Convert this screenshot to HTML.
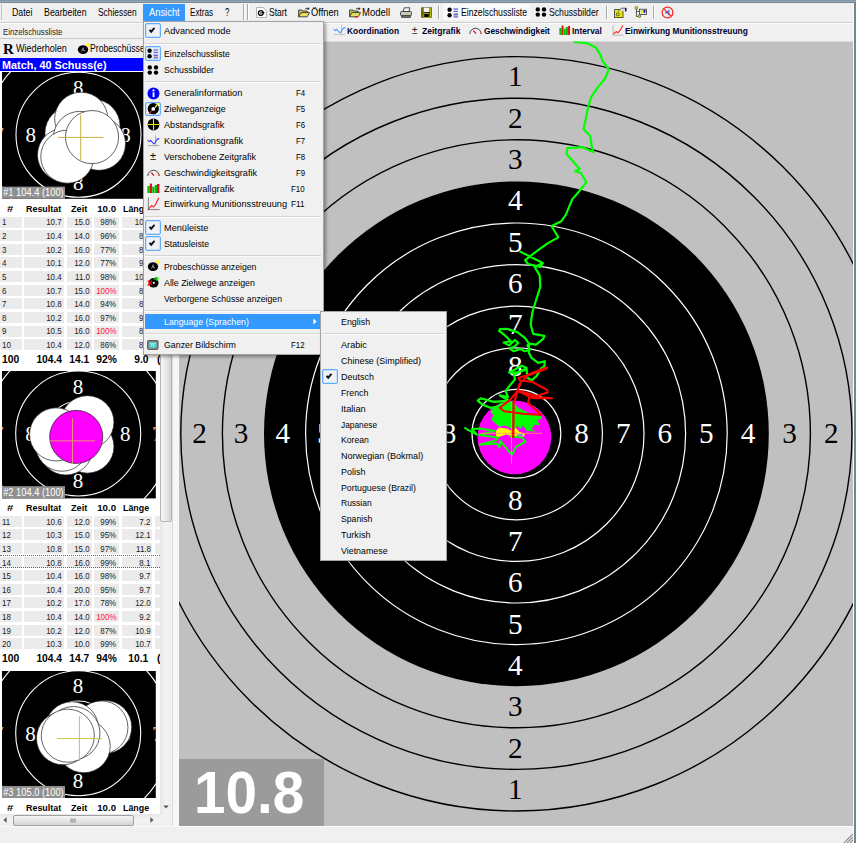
<!DOCTYPE html>
<html lang="de"><head><meta charset="utf-8"><title>Einzelschussliste</title>
<style>
html,body{margin:0;padding:0}
body{width:856px;height:843px;position:relative;overflow:hidden;background:#f0f0f0;font-family:"Liberation Sans",sans-serif;font-size:10px;color:#000}
.abs{position:absolute}
.t{position:absolute;white-space:nowrap;line-height:1;transform-origin:0 50%}
.c{position:absolute;background:#ebebeb}
.ck{border:1px solid #62adfb;box-shadow:inset 0 0 0 0.5px #a8d0fb;background:#eef1f5;border-radius:2px}
.menu{position:absolute;background:#f0f0f0;border:1px solid #a2a2a2;box-shadow:2px 2px 3px rgba(0,0,0,.35)}
.sep{position:absolute;height:0;border-top:1px solid #d4d4d4;border-bottom:1px solid #fbfbfb}
.vs{position:absolute;width:0;border-left:1px solid #a8a8a8;border-right:1px solid #fdfdfd}
</style></head><body>
<div class="abs" style="left:0;top:0;width:856px;height:3px;background:linear-gradient(#7d97ab 0,#7d97ab 33%,#93a8b8 33%,#93a8b8 66%,#7a8790 66%)"></div>
<div class="abs" style="left:854.4px;top:2px;width:1.6px;height:841px;background:#74858f"></div>
<div class="abs" style="left:853px;top:3px;width:1.4px;height:840px;background:#fafafa"></div>
<div class="abs" style="left:0;top:3px;width:853px;height:18.6px;background:#f0f0f0"></div>
<div class="abs" style="left:0;top:21.6px;width:853px;height:1px;background:#cfcfcf"></div>
<div class="abs" style="left:0;top:22.6px;width:853px;height:1px;background:#fafafa"></div>
<div class="abs" style="left:1.4px;top:4px;width:1px;height:16px;background:#c4c4c4"></div>
<div class="abs" style="left:142.9px;top:3.6px;width:42.1px;height:17.4px;background:#3399ff"></div>
<div class="vs" style="left:243.4px;top:4px;height:16.4px"></div><div class="vs" style="left:247.2px;top:4px;height:16.4px"></div>
<div class="vs" style="left:438.4px;top:5.6px;height:13px"></div>
<div class="abs" style="left:443.2px;top:4.4px;width:87px;height:16px;background:#f9f9f9;border-radius:2px"></div>
<div class="vs" style="left:606px;top:5.6px;height:13px"></div><div class="vs" style="left:653.2px;top:5.6px;height:13px"></div>
<svg class="abs" style="left:255.9px;top:6.8px" width="11" height="11" viewBox="0 0 11 11" preserveAspectRatio="none"><path d="M0.5 0.5h6.6l3.4 3.2v6.8h-10z" fill="#fff" stroke="#999" stroke-width="0.7"/><circle cx="4.8" cy="6" r="2.4" fill="none" stroke="#000" stroke-width="1.3"/><circle cx="4.8" cy="6" r="0.7" fill="#000"/><path d="M5.4 5.8h3" stroke="#000" stroke-width="1.1"/></svg><svg class="abs" style="left:297.6px;top:6.7px" width="12" height="11" viewBox="0 0 12 11" preserveAspectRatio="none"><path d="M0.6 9.8V3h3.4l0.8 1h4.4v1.6" fill="#c8c060" stroke="#222" stroke-width="0.8"/><path d="M0.6 9.8L2.8 5.6h8.8L9.2 9.8z" fill="#e8e060" stroke="#222" stroke-width="0.8"/><path d="M7 2.2q2-2 3.6-0.4M10.8 0.6v1.6h-1.6" fill="none" stroke="#000" stroke-width="0.8"/></svg><svg class="abs" style="left:348.8px;top:6.7px" width="12" height="11" viewBox="0 0 12 11" preserveAspectRatio="none"><path d="M0.6 9.8V3h3.4l0.8 1h4.4v1.6" fill="#c8c060" stroke="#222" stroke-width="0.8"/><path d="M0.6 9.8L2.8 5.6h8.8L9.2 9.8z" fill="#e8e060" stroke="#222" stroke-width="0.8"/><path d="M7 2.2q2-2 3.6-0.4M10.8 0.6v1.6h-1.6" fill="none" stroke="#000" stroke-width="0.8"/><path d="M5.6 9.2l3.2 0l-1.6 2z" fill="#ff0000"/></svg><svg class="abs" style="left:399.8px;top:6.8px" width="12" height="11" viewBox="0 0 12 11" preserveAspectRatio="none"><path d="M3 4.6L4.4 0.8h5.4L9 4.6z" fill="#fff" stroke="#222" stroke-width="0.8"/><rect x="0.6" y="4.4" width="10.8" height="4.4" rx="1" fill="#c8c8c8" stroke="#222" stroke-width="0.8"/><path d="M1.6 8.8h8.8v1.6H1.6z" fill="#888" stroke="#222" stroke-width="0.7"/><rect x="5" y="6.4" width="3.4" height="1" fill="#d8d800"/></svg><svg class="abs" style="left:420.9px;top:6.9px" width="11" height="11" viewBox="0 0 11 11" preserveAspectRatio="none"><rect x="0.4" y="0.4" width="10.2" height="10.2" fill="#000"/><rect x="1.4" y="0.4" width="1" height="10" fill="#b8b800"/><rect x="2.6" y="0.6" width="6" height="4.6" fill="#f4f4f4"/><rect x="2.8" y="6.6" width="5.4" height="3.8" fill="#000" stroke="#c8c800" stroke-width="0.8"/><rect x="9" y="0.6" width="1.2" height="9.8" fill="#b8b800"/></svg>
<svg class="abs" style="left:446.9px;top:6.9px" width="12" height="11" viewBox="0 0 12 11" preserveAspectRatio="none"><circle cx="2.6" cy="2.8" r="2.2" fill="#000"/><circle cx="2.6" cy="8.2" r="2.2" fill="#000"/><rect x="6.5" y="0.8" width="4.6" height="4" fill="#d8d8d8"/><rect x="6.5" y="6.2" width="4.6" height="4" fill="#b8b8b8"/><path d="M6.6 2h4.4M6.6 4.6h4.4M6.6 7.4h4.4M6.6 10h4.4" stroke="#4a4aff" stroke-width="0.9"/></svg><svg class="abs" style="left:534.9px;top:7.4px" width="12" height="10" viewBox="0 0 12 10" preserveAspectRatio="none"><circle cx="2.8" cy="2.4" r="2.2" fill="#000"/><circle cx="2.8" cy="7.6" r="2.2" fill="#000"/><circle cx="9" cy="2.4" r="2.2" fill="#000"/><circle cx="9" cy="7.6" r="2.2" fill="#000"/></svg><svg class="abs" style="left:613.7px;top:6.9px" width="13" height="11" viewBox="0 0 13 11" preserveAspectRatio="none"><rect x="0.6" y="2.6" width="8.4" height="8" fill="#e8e800" stroke="#333" stroke-width="0.8"/><path d="M4 4.4L7.6 1.2h4.6v2.6" fill="#e0e0e0" stroke="#444" stroke-width="0.8"/><path d="M11.6 1v3.4" stroke="#0000c0" stroke-width="1.2"/><circle cx="3.8" cy="7.4" r="1.5" fill="none" stroke="#333" stroke-width="0.8"/></svg><svg class="abs" style="left:634.1px;top:6.4px" width="13" height="12" viewBox="0 0 13 12" preserveAspectRatio="none"><circle cx="2.4" cy="1.8" r="1.4" fill="#e8e800" stroke="#333" stroke-width="0.6"/><path d="M2.4 3v7.4h3M2.4 5.4h3" fill="none" stroke="#333" stroke-width="0.8"/><rect x="5.4" y="3.2" width="7" height="5.2" fill="#e8e8e8" stroke="#333" stroke-width="0.8"/><rect x="6.6" y="4.4" width="2.6" height="2.4" fill="#e8e800"/><rect x="9.6" y="4" width="1.8" height="2.6" fill="#0000c0"/><circle cx="5.4" cy="10.2" r="1.3" fill="#e8e800" stroke="#333" stroke-width="0.6"/></svg><svg class="abs" style="left:660.5px;top:5.9px" width="13" height="13" viewBox="0 0 13 13" preserveAspectRatio="none"><path d="M4 5.4h2l2.4-2.4v7L6 7.6H4z" fill="#3090ff"/><path d="M7.4 4.2q2 2.3 0 4.6" fill="#3090ff"/><circle cx="6.5" cy="6.5" r="5.4" fill="none" stroke="#ff2020" stroke-width="1.2"/><path d="M2.8 2.8L10.2 10.2" stroke="#ff2020" stroke-width="1.2"/></svg>
<svg class="abs" style="left:332.9px;top:24.4px" width="13" height="12" viewBox="0 0 13 12" preserveAspectRatio="none"><path d="M8.6 0.5v10.5M0.6 10.6h11.8" stroke="#c0c0c0" stroke-width="0.9" fill="none"/><path d="M0.5 5.2L2.2 6.6L3.6 5.3L5.2 7.2L6.8 8.8L8.4 7.4L9.6 5L11 3.6L12.4 4" stroke="#4a98ff" stroke-width="1.1" fill="none"/></svg><svg class="abs" style="left:469.4px;top:26.3px" width="13" height="9" viewBox="0 0 13 9" preserveAspectRatio="none"><path d="M0.8 8A5.7 5.7 0 0 1 12.2 8" stroke="#444" stroke-width="1" fill="none"/><path d="M11.9 6.2v2" stroke="#ff5050" stroke-width="0.9"/><path d="M4.4 4.6L7 7.6" stroke="#ff0000" stroke-width="1.3"/></svg><svg class="abs" style="left:559.0px;top:25.0px" width="11.6" height="10" viewBox="0 0 13 10" preserveAspectRatio="none"><rect x="0.4" y="3" width="2.4" height="7" fill="#00c000"/><rect x="2.8" y="0.6" width="2.2" height="9.4" fill="#e01020"/><rect x="5.2" y="3.6" width="2.4" height="6.4" fill="#00c000"/><rect x="7.8" y="2" width="2.2" height="8" fill="#00c000"/><rect x="10" y="1" width="2.4" height="9" fill="#e01020"/></svg><svg class="abs" style="left:611.8px;top:24.7px" width="12" height="11" viewBox="0 0 12 11" preserveAspectRatio="none"><path d="M1 0.4V10.4M0.4 10.2H11.6" stroke="#b4b4b4" stroke-width="0.9" fill="none"/><path d="M1.4 9L4.2 6.6L6 7.8L8.2 5.2L10.8 0.6" stroke="#ff2020" stroke-width="1.1" fill="none"/></svg>
<div class="abs" style="left:0;top:38.4px;width:173px;height:1px;background:#c9c9c9"></div>
<div class="abs" style="left:0;top:57.8px;width:160px;height:768px;background:#fff"></div>
<div class="abs" style="left:0;top:57.8px;width:160px;height:13.7px;background:#0000ff"></div>
<svg class="abs" style="left:76.9px;top:42.6px" width="13" height="12" viewBox="0 0 13 12" preserveAspectRatio="none"><path d="M8.4 0.6h4.2v4.2z" fill="#ffff00"/><ellipse cx="6" cy="6.6" rx="5.2" ry="4.4" fill="#000"/><path d="M6 4.6v2M6 6.6l-1.7 1.5M6 6.6l1.8 1.4" fill="none" stroke="#fff" stroke-width="0.8"/></svg>
<svg class="abs" style="left:2px;top:72.1px" width="153.8" height="126.8" viewBox="0 0 153.8 126.8">
<rect width="153.8" height="126.8" fill="#000"/>
<circle cx="76.5" cy="62.8" r="92.7" fill="none" stroke="#fff" stroke-width="1.1"/>
<circle cx="76.5" cy="62.8" r="62.5" fill="none" stroke="#fff" stroke-width="1.1"/>
<circle cx="76.5" cy="62.8" r="32.3" fill="none" stroke="#fff" stroke-width="1.1"/>
<g font-family='"Liberation Serif", serif' font-size="21" text-anchor="middle" fill="#fff">
<text x="76.2" y="23.0">8</text>
<text x="76.2" y="117.8">8</text>
<text x="28.8" y="70.4">8</text>
<text x="123.6" y="70.4">8</text>
<text x="-3.2" y="70.1" fill="#e8a060">7</text>
<text x="155.6" y="70.1" fill="#e8a060">7</text>
</g>
<circle cx="69.5" cy="60.9" r="26.55" fill="#fff" stroke="#222" stroke-width="0.7"/>
<circle cx="91.5" cy="53.9" r="26.55" fill="#fff" stroke="#222" stroke-width="0.7"/>
<circle cx="97" cy="71.8" r="26.55" fill="#fff" stroke="#222" stroke-width="0.7"/>
<circle cx="79.2" cy="46.8" r="26.55" fill="#fff" stroke="#222" stroke-width="0.7"/>
<circle cx="62" cy="82.9" r="26.55" fill="#fff" stroke="#222" stroke-width="0.7"/>
<circle cx="77.9" cy="65.9" r="26.55" fill="#fff" stroke="#222" stroke-width="0.7"/>
<circle cx="65.3" cy="84.7" r="26.55" fill="#fff" stroke="#222" stroke-width="0.7"/>
<circle cx="90" cy="65.1" r="26.55" fill="#fff" stroke="#222" stroke-width="0.7"/>
<path d="M56.1 65.4H101.30000000000001M78.7 42.800000000000004V88.0" stroke="#c8b040" stroke-width="1" fill="none"/>
<rect x="0" y="114.6" width="63" height="12.2" fill="#909090"/>
<text x="1.2" y="124.39999999999999" font-family='"Liberation Sans", sans-serif' font-size="10.3" fill="#fff" textLength="60.5" lengthAdjust="spacingAndGlyphs">#1 104.4 (100)</text>
</svg>
<div class="c" style="left:0px;top:216.5px;width:21.7px;height:11.0px"></div>
<div class="c" style="left:24.2px;top:216.5px;width:39.5px;height:11.0px"></div>
<div class="c" style="left:66.7px;top:216.5px;width:25.2px;height:11.0px"></div>
<div class="c" style="left:94.2px;top:216.5px;width:24.6px;height:11.0px"></div>
<div class="c" style="left:121.5px;top:216.5px;width:30.9px;height:11.0px"></div>
<div class="c" style="left:155.2px;top:216.5px;width:4.4px;height:11.0px"></div>
<div class="c" style="left:0px;top:230.1px;width:21.7px;height:11.0px"></div>
<div class="c" style="left:24.2px;top:230.1px;width:39.5px;height:11.0px"></div>
<div class="c" style="left:66.7px;top:230.1px;width:25.2px;height:11.0px"></div>
<div class="c" style="left:94.2px;top:230.1px;width:24.6px;height:11.0px"></div>
<div class="c" style="left:121.5px;top:230.1px;width:30.9px;height:11.0px"></div>
<div class="c" style="left:155.2px;top:230.1px;width:4.4px;height:11.0px"></div>
<div class="c" style="left:0px;top:243.7px;width:21.7px;height:11.0px"></div>
<div class="c" style="left:24.2px;top:243.7px;width:39.5px;height:11.0px"></div>
<div class="c" style="left:66.7px;top:243.7px;width:25.2px;height:11.0px"></div>
<div class="c" style="left:94.2px;top:243.7px;width:24.6px;height:11.0px"></div>
<div class="c" style="left:121.5px;top:243.7px;width:30.9px;height:11.0px"></div>
<div class="c" style="left:155.2px;top:243.7px;width:4.4px;height:11.0px"></div>
<div class="c" style="left:0px;top:257.4px;width:21.7px;height:11.0px"></div>
<div class="c" style="left:24.2px;top:257.4px;width:39.5px;height:11.0px"></div>
<div class="c" style="left:66.7px;top:257.4px;width:25.2px;height:11.0px"></div>
<div class="c" style="left:94.2px;top:257.4px;width:24.6px;height:11.0px"></div>
<div class="c" style="left:121.5px;top:257.4px;width:30.9px;height:11.0px"></div>
<div class="c" style="left:155.2px;top:257.4px;width:4.4px;height:11.0px"></div>
<div class="c" style="left:0px;top:271.0px;width:21.7px;height:11.0px"></div>
<div class="c" style="left:24.2px;top:271.0px;width:39.5px;height:11.0px"></div>
<div class="c" style="left:66.7px;top:271.0px;width:25.2px;height:11.0px"></div>
<div class="c" style="left:94.2px;top:271.0px;width:24.6px;height:11.0px"></div>
<div class="c" style="left:121.5px;top:271.0px;width:30.9px;height:11.0px"></div>
<div class="c" style="left:155.2px;top:271.0px;width:4.4px;height:11.0px"></div>
<div class="c" style="left:0px;top:284.6px;width:21.7px;height:11.0px"></div>
<div class="c" style="left:24.2px;top:284.6px;width:39.5px;height:11.0px"></div>
<div class="c" style="left:66.7px;top:284.6px;width:25.2px;height:11.0px"></div>
<div class="c" style="left:94.2px;top:284.6px;width:24.6px;height:11.0px"></div>
<div class="c" style="left:121.5px;top:284.6px;width:30.9px;height:11.0px"></div>
<div class="c" style="left:155.2px;top:284.6px;width:4.4px;height:11.0px"></div>
<div class="c" style="left:0px;top:298.2px;width:21.7px;height:11.0px"></div>
<div class="c" style="left:24.2px;top:298.2px;width:39.5px;height:11.0px"></div>
<div class="c" style="left:66.7px;top:298.2px;width:25.2px;height:11.0px"></div>
<div class="c" style="left:94.2px;top:298.2px;width:24.6px;height:11.0px"></div>
<div class="c" style="left:121.5px;top:298.2px;width:30.9px;height:11.0px"></div>
<div class="c" style="left:155.2px;top:298.2px;width:4.4px;height:11.0px"></div>
<div class="c" style="left:0px;top:311.8px;width:21.7px;height:11.0px"></div>
<div class="c" style="left:24.2px;top:311.8px;width:39.5px;height:11.0px"></div>
<div class="c" style="left:66.7px;top:311.8px;width:25.2px;height:11.0px"></div>
<div class="c" style="left:94.2px;top:311.8px;width:24.6px;height:11.0px"></div>
<div class="c" style="left:121.5px;top:311.8px;width:30.9px;height:11.0px"></div>
<div class="c" style="left:155.2px;top:311.8px;width:4.4px;height:11.0px"></div>
<div class="c" style="left:0px;top:325.5px;width:21.7px;height:11.0px"></div>
<div class="c" style="left:24.2px;top:325.5px;width:39.5px;height:11.0px"></div>
<div class="c" style="left:66.7px;top:325.5px;width:25.2px;height:11.0px"></div>
<div class="c" style="left:94.2px;top:325.5px;width:24.6px;height:11.0px"></div>
<div class="c" style="left:121.5px;top:325.5px;width:30.9px;height:11.0px"></div>
<div class="c" style="left:155.2px;top:325.5px;width:4.4px;height:11.0px"></div>
<div class="c" style="left:0px;top:339.1px;width:21.7px;height:11.0px"></div>
<div class="c" style="left:24.2px;top:339.1px;width:39.5px;height:11.0px"></div>
<div class="c" style="left:66.7px;top:339.1px;width:25.2px;height:11.0px"></div>
<div class="c" style="left:94.2px;top:339.1px;width:24.6px;height:11.0px"></div>
<div class="c" style="left:121.5px;top:339.1px;width:30.9px;height:11.0px"></div>
<div class="c" style="left:155.2px;top:339.1px;width:4.4px;height:11.0px"></div>
<svg class="abs" style="left:2px;top:371.4px" width="153.8" height="127.4" viewBox="0 0 153.8 127.4">
<rect width="153.8" height="127.4" fill="#000"/>
<circle cx="76.2" cy="62.5" r="92.7" fill="none" stroke="#fff" stroke-width="1.1"/>
<circle cx="76.2" cy="62.5" r="62.5" fill="none" stroke="#fff" stroke-width="1.1"/>
<circle cx="76.2" cy="62.5" r="32.3" fill="none" stroke="#fff" stroke-width="1.1"/>
<g font-family='"Liberation Serif", serif' font-size="21" text-anchor="middle" fill="#fff">
<text x="75.9" y="22.7">8</text>
<text x="75.9" y="117.5">8</text>
<text x="28.5" y="70.1">8</text>
<text x="123.3" y="70.1">8</text>
<text x="-3.5" y="69.8" fill="#e8a060">7</text>
<text x="155.3" y="69.8" fill="#e8a060">7</text>
</g>
<circle cx="85.4" cy="75.6" r="26.55" fill="#fff" stroke="#222" stroke-width="0.7"/>
<circle cx="85.4" cy="51.2" r="26.55" fill="#fff" stroke="#222" stroke-width="0.7"/>
<circle cx="64" cy="77.5" r="26.55" fill="#fff" stroke="#222" stroke-width="0.7"/>
<circle cx="60" cy="73.7" r="26.55" fill="#fff" stroke="#222" stroke-width="0.7"/>
<circle cx="54.1" cy="63.4" r="26.55" fill="#fff" stroke="#222" stroke-width="0.7"/>
<circle cx="74.2" cy="65.9" r="26.55" fill="#ff00ff" stroke="#222" stroke-width="0.7"/>
<path d="M47.9 69.9H93.1M70.5 47.300000000000004V92.5" stroke="#ee9070" stroke-width="1" fill="none"/>
<rect x="0" y="115.2" width="63" height="12.2" fill="#909090"/>
<text x="1.2" y="125.0" font-family='"Liberation Sans", sans-serif' font-size="10.3" fill="#fff" textLength="60.5" lengthAdjust="spacingAndGlyphs">#2 104.4 (100)</text>
</svg>
<div class="c" style="left:0px;top:515.7px;width:21.7px;height:11.0px"></div>
<div class="c" style="left:24.2px;top:515.7px;width:39.5px;height:11.0px"></div>
<div class="c" style="left:66.7px;top:515.7px;width:25.2px;height:11.0px"></div>
<div class="c" style="left:94.2px;top:515.7px;width:24.6px;height:11.0px"></div>
<div class="c" style="left:121.5px;top:515.7px;width:30.9px;height:11.0px"></div>
<div class="c" style="left:155.2px;top:515.7px;width:4.4px;height:11.0px"></div>
<div class="c" style="left:0px;top:529.3px;width:21.7px;height:11.0px"></div>
<div class="c" style="left:24.2px;top:529.3px;width:39.5px;height:11.0px"></div>
<div class="c" style="left:66.7px;top:529.3px;width:25.2px;height:11.0px"></div>
<div class="c" style="left:94.2px;top:529.3px;width:24.6px;height:11.0px"></div>
<div class="c" style="left:121.5px;top:529.3px;width:30.9px;height:11.0px"></div>
<div class="c" style="left:155.2px;top:529.3px;width:4.4px;height:11.0px"></div>
<div class="c" style="left:0px;top:542.9px;width:21.7px;height:11.0px"></div>
<div class="c" style="left:24.2px;top:542.9px;width:39.5px;height:11.0px"></div>
<div class="c" style="left:66.7px;top:542.9px;width:25.2px;height:11.0px"></div>
<div class="c" style="left:94.2px;top:542.9px;width:24.6px;height:11.0px"></div>
<div class="c" style="left:121.5px;top:542.9px;width:30.9px;height:11.0px"></div>
<div class="c" style="left:155.2px;top:542.9px;width:4.4px;height:11.0px"></div>
<div class="c" style="left:0px;top:556.6px;width:21.7px;height:11.0px"></div>
<div class="c" style="left:24.2px;top:556.6px;width:39.5px;height:11.0px"></div>
<div class="c" style="left:66.7px;top:556.6px;width:25.2px;height:11.0px"></div>
<div class="c" style="left:94.2px;top:556.6px;width:24.6px;height:11.0px"></div>
<div class="c" style="left:121.5px;top:556.6px;width:30.9px;height:11.0px"></div>
<div class="c" style="left:155.2px;top:556.6px;width:4.4px;height:11.0px"></div>
<div class="c" style="left:0px;top:570.2px;width:21.7px;height:11.0px"></div>
<div class="c" style="left:24.2px;top:570.2px;width:39.5px;height:11.0px"></div>
<div class="c" style="left:66.7px;top:570.2px;width:25.2px;height:11.0px"></div>
<div class="c" style="left:94.2px;top:570.2px;width:24.6px;height:11.0px"></div>
<div class="c" style="left:121.5px;top:570.2px;width:30.9px;height:11.0px"></div>
<div class="c" style="left:155.2px;top:570.2px;width:4.4px;height:11.0px"></div>
<div class="c" style="left:0px;top:583.8px;width:21.7px;height:11.0px"></div>
<div class="c" style="left:24.2px;top:583.8px;width:39.5px;height:11.0px"></div>
<div class="c" style="left:66.7px;top:583.8px;width:25.2px;height:11.0px"></div>
<div class="c" style="left:94.2px;top:583.8px;width:24.6px;height:11.0px"></div>
<div class="c" style="left:121.5px;top:583.8px;width:30.9px;height:11.0px"></div>
<div class="c" style="left:155.2px;top:583.8px;width:4.4px;height:11.0px"></div>
<div class="c" style="left:0px;top:597.4px;width:21.7px;height:11.0px"></div>
<div class="c" style="left:24.2px;top:597.4px;width:39.5px;height:11.0px"></div>
<div class="c" style="left:66.7px;top:597.4px;width:25.2px;height:11.0px"></div>
<div class="c" style="left:94.2px;top:597.4px;width:24.6px;height:11.0px"></div>
<div class="c" style="left:121.5px;top:597.4px;width:30.9px;height:11.0px"></div>
<div class="c" style="left:155.2px;top:597.4px;width:4.4px;height:11.0px"></div>
<div class="c" style="left:0px;top:611.0px;width:21.7px;height:11.0px"></div>
<div class="c" style="left:24.2px;top:611.0px;width:39.5px;height:11.0px"></div>
<div class="c" style="left:66.7px;top:611.0px;width:25.2px;height:11.0px"></div>
<div class="c" style="left:94.2px;top:611.0px;width:24.6px;height:11.0px"></div>
<div class="c" style="left:121.5px;top:611.0px;width:30.9px;height:11.0px"></div>
<div class="c" style="left:155.2px;top:611.0px;width:4.4px;height:11.0px"></div>
<div class="c" style="left:0px;top:624.7px;width:21.7px;height:11.0px"></div>
<div class="c" style="left:24.2px;top:624.7px;width:39.5px;height:11.0px"></div>
<div class="c" style="left:66.7px;top:624.7px;width:25.2px;height:11.0px"></div>
<div class="c" style="left:94.2px;top:624.7px;width:24.6px;height:11.0px"></div>
<div class="c" style="left:121.5px;top:624.7px;width:30.9px;height:11.0px"></div>
<div class="c" style="left:155.2px;top:624.7px;width:4.4px;height:11.0px"></div>
<div class="c" style="left:0px;top:638.3px;width:21.7px;height:11.0px"></div>
<div class="c" style="left:24.2px;top:638.3px;width:39.5px;height:11.0px"></div>
<div class="c" style="left:66.7px;top:638.3px;width:25.2px;height:11.0px"></div>
<div class="c" style="left:94.2px;top:638.3px;width:24.6px;height:11.0px"></div>
<div class="c" style="left:121.5px;top:638.3px;width:30.9px;height:11.0px"></div>
<div class="c" style="left:155.2px;top:638.3px;width:4.4px;height:11.0px"></div>
<svg class="abs" style="left:2px;top:670.7px" width="153.8" height="127.2" viewBox="0 0 153.8 127.2">
<rect width="153.8" height="127.2" fill="#000"/>
<circle cx="76.2" cy="62.3" r="92.7" fill="none" stroke="#fff" stroke-width="1.1"/>
<circle cx="76.2" cy="62.3" r="62.5" fill="none" stroke="#fff" stroke-width="1.1"/>
<circle cx="76.2" cy="62.3" r="32.3" fill="none" stroke="#fff" stroke-width="1.1"/>
<g font-family='"Liberation Serif", serif' font-size="21" text-anchor="middle" fill="#fff">
<text x="75.9" y="22.5">8</text>
<text x="75.9" y="117.3">8</text>
<text x="28.5" y="69.9">8</text>
<text x="123.3" y="69.9">8</text>
<text x="-3.5" y="69.6" fill="#e8a060">7</text>
<text x="155.3" y="69.6" fill="#e8a060">7</text>
</g>
<circle cx="103.2" cy="56.1" r="26.55" fill="#fff" stroke="#222" stroke-width="0.7"/>
<circle cx="99.4" cy="56.5" r="26.55" fill="#fff" stroke="#222" stroke-width="0.7"/>
<circle cx="70" cy="57.3" r="26.55" fill="#fff" stroke="#222" stroke-width="0.7"/>
<circle cx="81.7" cy="75.2" r="26.55" fill="#fff" stroke="#222" stroke-width="0.7"/>
<circle cx="61" cy="67.3" r="26.55" fill="#fff" stroke="#222" stroke-width="0.7"/>
<circle cx="71.4" cy="62.1" r="26.55" fill="#fff" stroke="#222" stroke-width="0.7"/>
<circle cx="65.8" cy="64.7" r="26.55" fill="#fff" stroke="#222" stroke-width="0.7"/>
<path d="M55.00000000000001 67.6H99.80000000000001M77.4 45.199999999999996V90.0" stroke="#d0c050" stroke-width="1" fill="none"/>
<rect x="0" y="115.0" width="63" height="12.2" fill="#909090"/>
<text x="1.2" y="124.8" font-family='"Liberation Sans", sans-serif' font-size="10.3" fill="#fff" textLength="60.5" lengthAdjust="spacingAndGlyphs">#3 105.0 (100)</text>
</svg>
<span class="t" style='left:11.5px;top:8.0px;font-size:10.1px;transform:scaleX(0.866);'>Datei</span>
<span class="t" style='left:43.7px;top:8.0px;font-size:10.1px;transform:scaleX(0.873);'>Bearbeiten</span>
<span class="t" style='left:97.9px;top:8.0px;font-size:10.1px;transform:scaleX(0.831);'>Schiessen</span>
<span class="t" style='left:148.6px;top:8.0px;font-size:10.1px;color:#fff;transform:scaleX(0.927);'>Ansicht</span>
<span class="t" style='left:190.3px;top:8.0px;font-size:10.1px;transform:scaleX(0.808);'>Extras</span>
<span class="t" style='left:225.0px;top:8.0px;font-size:10.1px;transform:scaleX(0.766);'>?</span>
<span class="t" style='left:269.3px;top:8.0px;font-size:10.1px;transform:scaleX(0.844);'>Start</span>
<span class="t" style='left:310.9px;top:8.0px;font-size:10.1px;transform:scaleX(0.920);'>Öffnen</span>
<span class="t" style='left:362.3px;top:8.0px;font-size:10.1px;transform:scaleX(0.942);'>Modell</span>
<span class="t" style='left:460.6px;top:8.0px;font-size:10.1px;transform:scaleX(0.859);'>Einzelschussliste</span>
<span class="t" style='left:548.9px;top:8.0px;font-size:10.1px;transform:scaleX(0.858);'>Schussbilder</span>
<span class="t" style='left:2.9px;top:26.9px;font-size:9.5px;color:#222;transform:scaleX(0.822);'>Einzelschussliste</span>
<span class="t" style='left:346.7px;top:26.2px;font-size:9.6px;font-weight:700;color:#00002c;transform:scaleX(0.872);'>Koordination</span>
<span class="t" style='left:412.2px;top:26.0px;font-size:10px;color:#222;transform:scaleX(0.982);'>±</span>
<span class="t" style='left:422.0px;top:26.2px;font-size:9.6px;font-weight:700;color:#00002c;transform:scaleX(0.891);'>Zeitgrafik</span>
<span class="t" style='left:483.5px;top:26.2px;font-size:9.6px;font-weight:700;color:#00002c;transform:scaleX(0.864);'>Geschwindigkeit</span>
<span class="t" style='left:572.3px;top:26.2px;font-size:9.6px;font-weight:700;color:#00002c;transform:scaleX(0.872);'>Interval</span>
<span class="t" style='left:625.3px;top:26.2px;font-size:9.6px;font-weight:700;color:#00002c;transform:scaleX(0.873);'>Einwirkung Munitionsstreuung</span>
<span class="t" style='left:3.4px;top:41.9px;font-size:14.5px;font-weight:700;font-family:"Liberation Serif", serif;transform:scaleX(1.032);'>R</span>
<span class="t" style='left:16.4px;top:44.4px;font-size:10.1px;transform:scaleX(0.897);'>Wiederholen</span>
<span class="t" style='left:90.3px;top:44.4px;font-size:10.1px;transform:scaleX(0.855);'>Probeschüsse</span>
<span class="t" style='left:1.5px;top:59.8px;font-size:10.6px;font-weight:700;color:#fff;transform:scaleX(1.026);'>Match, 40 Schuss(e)</span>
<span class="t" style='left:7.2px;top:203.7px;font-size:9.7px;font-weight:700;transform:scaleX(1.165);'>#</span>
<span class="t" style='left:25.7px;top:203.7px;font-size:9.7px;font-weight:700;transform:scaleX(0.920);'>Resultat</span>
<span class="t" style='left:71.0px;top:203.7px;font-size:9.7px;font-weight:700;transform:scaleX(0.945);'>Zeit</span>
<span class="t" style='left:97.2px;top:203.7px;font-size:9.7px;font-weight:700;'>10.0</span>
<span class="t" style='left:123.0px;top:203.7px;font-size:9.7px;font-weight:700;transform:scaleX(0.914);'>Länge</span>
<span class="t" style='left:1.8px;top:217.4px;font-size:9.6px;color:#222;transform:scaleX(0.830);'>1</span>
<span class="t" style='right:794.0px;top:217.4px;font-size:9.6px;color:#222;transform:scaleX(0.830);transform-origin:100% 50%;'>10.7</span>
<span class="t" style='right:766.0px;top:217.4px;font-size:9.6px;color:#222;transform:scaleX(0.830);transform-origin:100% 50%;'>15.0</span>
<span class="t" style='right:739.5px;top:217.4px;font-size:9.6px;color:#222;transform:scaleX(0.830);transform-origin:100% 50%;'>98%</span>
<span class="t" style='right:712.4px;top:217.4px;font-size:9.6px;color:#222;transform:scaleX(0.830);transform-origin:100% 50%;'>10</span>
<span class="t" style='left:1.8px;top:231.0px;font-size:9.6px;color:#222;transform:scaleX(0.830);'>2</span>
<span class="t" style='right:794.0px;top:231.0px;font-size:9.6px;color:#222;transform:scaleX(0.830);transform-origin:100% 50%;'>10.4</span>
<span class="t" style='right:766.0px;top:231.0px;font-size:9.6px;color:#222;transform:scaleX(0.830);transform-origin:100% 50%;'>14.0</span>
<span class="t" style='right:739.5px;top:231.0px;font-size:9.6px;color:#222;transform:scaleX(0.830);transform-origin:100% 50%;'>96%</span>
<span class="t" style='right:712.4px;top:231.0px;font-size:9.6px;color:#222;transform:scaleX(0.830);transform-origin:100% 50%;'>8</span>
<span class="t" style='left:1.8px;top:244.6px;font-size:9.6px;color:#222;transform:scaleX(0.830);'>3</span>
<span class="t" style='right:794.0px;top:244.6px;font-size:9.6px;color:#222;transform:scaleX(0.830);transform-origin:100% 50%;'>10.2</span>
<span class="t" style='right:766.0px;top:244.6px;font-size:9.6px;color:#222;transform:scaleX(0.830);transform-origin:100% 50%;'>16.0</span>
<span class="t" style='right:739.5px;top:244.6px;font-size:9.6px;color:#222;transform:scaleX(0.830);transform-origin:100% 50%;'>77%</span>
<span class="t" style='right:712.4px;top:244.6px;font-size:9.6px;color:#222;transform:scaleX(0.830);transform-origin:100% 50%;'>8</span>
<span class="t" style='left:1.8px;top:258.3px;font-size:9.6px;color:#222;transform:scaleX(0.830);'>4</span>
<span class="t" style='right:794.0px;top:258.3px;font-size:9.6px;color:#222;transform:scaleX(0.830);transform-origin:100% 50%;'>10.1</span>
<span class="t" style='right:766.0px;top:258.3px;font-size:9.6px;color:#222;transform:scaleX(0.830);transform-origin:100% 50%;'>12.0</span>
<span class="t" style='right:739.5px;top:258.3px;font-size:9.6px;color:#222;transform:scaleX(0.830);transform-origin:100% 50%;'>77%</span>
<span class="t" style='right:712.4px;top:258.3px;font-size:9.6px;color:#222;transform:scaleX(0.830);transform-origin:100% 50%;'>9</span>
<span class="t" style='left:1.8px;top:271.9px;font-size:9.6px;color:#222;transform:scaleX(0.830);'>5</span>
<span class="t" style='right:794.0px;top:271.9px;font-size:9.6px;color:#222;transform:scaleX(0.830);transform-origin:100% 50%;'>10.4</span>
<span class="t" style='right:766.0px;top:271.9px;font-size:9.6px;color:#222;transform:scaleX(0.830);transform-origin:100% 50%;'>11.0</span>
<span class="t" style='right:739.5px;top:271.9px;font-size:9.6px;color:#222;transform:scaleX(0.830);transform-origin:100% 50%;'>98%</span>
<span class="t" style='right:712.4px;top:271.9px;font-size:9.6px;color:#222;transform:scaleX(0.830);transform-origin:100% 50%;'>10</span>
<span class="t" style='left:1.8px;top:285.5px;font-size:9.6px;color:#222;transform:scaleX(0.830);'>6</span>
<span class="t" style='right:794.0px;top:285.5px;font-size:9.6px;color:#222;transform:scaleX(0.830);transform-origin:100% 50%;'>10.7</span>
<span class="t" style='right:766.0px;top:285.5px;font-size:9.6px;color:#222;transform:scaleX(0.830);transform-origin:100% 50%;'>15.0</span>
<span class="t" style='right:739.5px;top:285.5px;font-size:9.6px;color:#ff1030;transform:scaleX(0.830);transform-origin:100% 50%;'>100%</span>
<span class="t" style='right:712.4px;top:285.5px;font-size:9.6px;color:#222;transform:scaleX(0.830);transform-origin:100% 50%;'>8</span>
<span class="t" style='left:1.8px;top:299.1px;font-size:9.6px;color:#222;transform:scaleX(0.830);'>7</span>
<span class="t" style='right:794.0px;top:299.1px;font-size:9.6px;color:#222;transform:scaleX(0.830);transform-origin:100% 50%;'>10.8</span>
<span class="t" style='right:766.0px;top:299.1px;font-size:9.6px;color:#222;transform:scaleX(0.830);transform-origin:100% 50%;'>14.0</span>
<span class="t" style='right:739.5px;top:299.1px;font-size:9.6px;color:#222;transform:scaleX(0.830);transform-origin:100% 50%;'>94%</span>
<span class="t" style='right:712.4px;top:299.1px;font-size:9.6px;color:#222;transform:scaleX(0.830);transform-origin:100% 50%;'>8</span>
<span class="t" style='left:1.8px;top:312.7px;font-size:9.6px;color:#222;transform:scaleX(0.830);'>8</span>
<span class="t" style='right:794.0px;top:312.7px;font-size:9.6px;color:#222;transform:scaleX(0.830);transform-origin:100% 50%;'>10.2</span>
<span class="t" style='right:766.0px;top:312.7px;font-size:9.6px;color:#222;transform:scaleX(0.830);transform-origin:100% 50%;'>16.0</span>
<span class="t" style='right:739.5px;top:312.7px;font-size:9.6px;color:#222;transform:scaleX(0.830);transform-origin:100% 50%;'>97%</span>
<span class="t" style='right:712.4px;top:312.7px;font-size:9.6px;color:#222;transform:scaleX(0.830);transform-origin:100% 50%;'>9</span>
<span class="t" style='left:1.8px;top:326.4px;font-size:9.6px;color:#222;transform:scaleX(0.830);'>9</span>
<span class="t" style='right:794.0px;top:326.4px;font-size:9.6px;color:#222;transform:scaleX(0.830);transform-origin:100% 50%;'>10.5</span>
<span class="t" style='right:766.0px;top:326.4px;font-size:9.6px;color:#222;transform:scaleX(0.830);transform-origin:100% 50%;'>16.0</span>
<span class="t" style='right:739.5px;top:326.4px;font-size:9.6px;color:#ff1030;transform:scaleX(0.830);transform-origin:100% 50%;'>100%</span>
<span class="t" style='right:712.4px;top:326.4px;font-size:9.6px;color:#222;transform:scaleX(0.830);transform-origin:100% 50%;'>8</span>
<span class="t" style='left:1.8px;top:340.0px;font-size:9.6px;color:#222;transform:scaleX(0.830);'>10</span>
<span class="t" style='right:794.0px;top:340.0px;font-size:9.6px;color:#222;transform:scaleX(0.830);transform-origin:100% 50%;'>10.4</span>
<span class="t" style='right:766.0px;top:340.0px;font-size:9.6px;color:#222;transform:scaleX(0.830);transform-origin:100% 50%;'>12.0</span>
<span class="t" style='right:739.5px;top:340.0px;font-size:9.6px;color:#222;transform:scaleX(0.830);transform-origin:100% 50%;'>86%</span>
<span class="t" style='right:712.4px;top:340.0px;font-size:9.6px;color:#222;transform:scaleX(0.830);transform-origin:100% 50%;'>8</span>
<span class="t" style='left:7.2px;top:502.9px;font-size:9.7px;font-weight:700;transform:scaleX(1.165);'>#</span>
<span class="t" style='left:25.7px;top:502.9px;font-size:9.7px;font-weight:700;transform:scaleX(0.920);'>Resultat</span>
<span class="t" style='left:71.0px;top:502.9px;font-size:9.7px;font-weight:700;transform:scaleX(0.945);'>Zeit</span>
<span class="t" style='left:97.2px;top:502.9px;font-size:9.7px;font-weight:700;'>10.0</span>
<span class="t" style='left:123.0px;top:502.9px;font-size:9.7px;font-weight:700;transform:scaleX(0.914);'>Länge</span>
<span class="t" style='left:1.8px;top:516.6px;font-size:9.6px;color:#222;transform:scaleX(0.830);'>11</span>
<span class="t" style='right:794.0px;top:516.6px;font-size:9.6px;color:#222;transform:scaleX(0.830);transform-origin:100% 50%;'>10.6</span>
<span class="t" style='right:766.0px;top:516.6px;font-size:9.6px;color:#222;transform:scaleX(0.830);transform-origin:100% 50%;'>12.0</span>
<span class="t" style='right:739.5px;top:516.6px;font-size:9.6px;color:#222;transform:scaleX(0.830);transform-origin:100% 50%;'>99%</span>
<span class="t" style='right:705.5px;top:516.6px;font-size:9.6px;color:#222;transform:scaleX(0.830);transform-origin:100% 50%;'>7.2</span>
<span class="t" style='left:1.8px;top:530.2px;font-size:9.6px;color:#222;transform:scaleX(0.830);'>12</span>
<span class="t" style='right:794.0px;top:530.2px;font-size:9.6px;color:#222;transform:scaleX(0.830);transform-origin:100% 50%;'>10.3</span>
<span class="t" style='right:766.0px;top:530.2px;font-size:9.6px;color:#222;transform:scaleX(0.830);transform-origin:100% 50%;'>15.0</span>
<span class="t" style='right:739.5px;top:530.2px;font-size:9.6px;color:#222;transform:scaleX(0.830);transform-origin:100% 50%;'>95%</span>
<span class="t" style='right:705.5px;top:530.2px;font-size:9.6px;color:#222;transform:scaleX(0.830);transform-origin:100% 50%;'>12.1</span>
<span class="t" style='left:1.8px;top:543.8px;font-size:9.6px;color:#222;transform:scaleX(0.830);'>13</span>
<span class="t" style='right:794.0px;top:543.8px;font-size:9.6px;color:#222;transform:scaleX(0.830);transform-origin:100% 50%;'>10.8</span>
<span class="t" style='right:766.0px;top:543.8px;font-size:9.6px;color:#222;transform:scaleX(0.830);transform-origin:100% 50%;'>15.0</span>
<span class="t" style='right:739.5px;top:543.8px;font-size:9.6px;color:#222;transform:scaleX(0.830);transform-origin:100% 50%;'>97%</span>
<span class="t" style='right:705.5px;top:543.8px;font-size:9.6px;color:#222;transform:scaleX(0.830);transform-origin:100% 50%;'>11.8</span>
<span class="t" style='left:1.8px;top:557.5px;font-size:9.6px;color:#222;transform:scaleX(0.830);'>14</span>
<span class="t" style='right:794.0px;top:557.5px;font-size:9.6px;color:#222;transform:scaleX(0.830);transform-origin:100% 50%;'>10.8</span>
<span class="t" style='right:766.0px;top:557.5px;font-size:9.6px;color:#222;transform:scaleX(0.830);transform-origin:100% 50%;'>16.0</span>
<span class="t" style='right:739.5px;top:557.5px;font-size:9.6px;color:#222;transform:scaleX(0.830);transform-origin:100% 50%;'>99%</span>
<span class="t" style='right:705.5px;top:557.5px;font-size:9.6px;color:#222;transform:scaleX(0.830);transform-origin:100% 50%;'>8.1</span>
<span class="t" style='left:1.8px;top:571.1px;font-size:9.6px;color:#222;transform:scaleX(0.830);'>15</span>
<span class="t" style='right:794.0px;top:571.1px;font-size:9.6px;color:#222;transform:scaleX(0.830);transform-origin:100% 50%;'>10.4</span>
<span class="t" style='right:766.0px;top:571.1px;font-size:9.6px;color:#222;transform:scaleX(0.830);transform-origin:100% 50%;'>16.0</span>
<span class="t" style='right:739.5px;top:571.1px;font-size:9.6px;color:#222;transform:scaleX(0.830);transform-origin:100% 50%;'>98%</span>
<span class="t" style='right:705.5px;top:571.1px;font-size:9.6px;color:#222;transform:scaleX(0.830);transform-origin:100% 50%;'>9.7</span>
<span class="t" style='left:1.8px;top:584.7px;font-size:9.6px;color:#222;transform:scaleX(0.830);'>16</span>
<span class="t" style='right:794.0px;top:584.7px;font-size:9.6px;color:#222;transform:scaleX(0.830);transform-origin:100% 50%;'>10.4</span>
<span class="t" style='right:766.0px;top:584.7px;font-size:9.6px;color:#222;transform:scaleX(0.830);transform-origin:100% 50%;'>20.0</span>
<span class="t" style='right:739.5px;top:584.7px;font-size:9.6px;color:#222;transform:scaleX(0.830);transform-origin:100% 50%;'>95%</span>
<span class="t" style='right:705.5px;top:584.7px;font-size:9.6px;color:#222;transform:scaleX(0.830);transform-origin:100% 50%;'>9.7</span>
<span class="t" style='left:1.8px;top:598.3px;font-size:9.6px;color:#222;transform:scaleX(0.830);'>17</span>
<span class="t" style='right:794.0px;top:598.3px;font-size:9.6px;color:#222;transform:scaleX(0.830);transform-origin:100% 50%;'>10.2</span>
<span class="t" style='right:766.0px;top:598.3px;font-size:9.6px;color:#222;transform:scaleX(0.830);transform-origin:100% 50%;'>17.0</span>
<span class="t" style='right:739.5px;top:598.3px;font-size:9.6px;color:#222;transform:scaleX(0.830);transform-origin:100% 50%;'>78%</span>
<span class="t" style='right:705.5px;top:598.3px;font-size:9.6px;color:#222;transform:scaleX(0.830);transform-origin:100% 50%;'>12.0</span>
<span class="t" style='left:1.8px;top:611.9px;font-size:9.6px;color:#222;transform:scaleX(0.830);'>18</span>
<span class="t" style='right:794.0px;top:611.9px;font-size:9.6px;color:#222;transform:scaleX(0.830);transform-origin:100% 50%;'>10.4</span>
<span class="t" style='right:766.0px;top:611.9px;font-size:9.6px;color:#222;transform:scaleX(0.830);transform-origin:100% 50%;'>14.0</span>
<span class="t" style='right:739.5px;top:611.9px;font-size:9.6px;color:#ff1030;transform:scaleX(0.830);transform-origin:100% 50%;'>100%</span>
<span class="t" style='right:705.5px;top:611.9px;font-size:9.6px;color:#222;transform:scaleX(0.830);transform-origin:100% 50%;'>9.2</span>
<span class="t" style='left:1.8px;top:625.6px;font-size:9.6px;color:#222;transform:scaleX(0.830);'>19</span>
<span class="t" style='right:794.0px;top:625.6px;font-size:9.6px;color:#222;transform:scaleX(0.830);transform-origin:100% 50%;'>10.2</span>
<span class="t" style='right:766.0px;top:625.6px;font-size:9.6px;color:#222;transform:scaleX(0.830);transform-origin:100% 50%;'>12.0</span>
<span class="t" style='right:739.5px;top:625.6px;font-size:9.6px;color:#222;transform:scaleX(0.830);transform-origin:100% 50%;'>87%</span>
<span class="t" style='right:705.5px;top:625.6px;font-size:9.6px;color:#222;transform:scaleX(0.830);transform-origin:100% 50%;'>10.9</span>
<span class="t" style='left:1.8px;top:639.2px;font-size:9.6px;color:#222;transform:scaleX(0.830);'>20</span>
<span class="t" style='right:794.0px;top:639.2px;font-size:9.6px;color:#222;transform:scaleX(0.830);transform-origin:100% 50%;'>10.3</span>
<span class="t" style='right:766.0px;top:639.2px;font-size:9.6px;color:#222;transform:scaleX(0.830);transform-origin:100% 50%;'>10.0</span>
<span class="t" style='right:739.5px;top:639.2px;font-size:9.6px;color:#222;transform:scaleX(0.830);transform-origin:100% 50%;'>99%</span>
<span class="t" style='right:705.5px;top:639.2px;font-size:9.6px;color:#222;transform:scaleX(0.830);transform-origin:100% 50%;'>10.7</span>
<span class="t" style='left:7.2px;top:802.7px;font-size:9.7px;font-weight:700;transform:scaleX(1.165);'>#</span>
<span class="t" style='left:25.7px;top:802.7px;font-size:9.7px;font-weight:700;transform:scaleX(0.920);'>Resultat</span>
<span class="t" style='left:71.0px;top:802.7px;font-size:9.7px;font-weight:700;transform:scaleX(0.945);'>Zeit</span>
<span class="t" style='left:97.2px;top:802.7px;font-size:9.7px;font-weight:700;'>10.0</span>
<span class="t" style='left:123.0px;top:802.7px;font-size:9.7px;font-weight:700;transform:scaleX(0.914);'>Länge</span>
<span class="t" style='left:2.0px;top:354.6px;font-size:10.4px;font-weight:700;transform:scaleX(0.993);'>100</span>
<span class="t" style='right:794.4px;top:354.6px;font-size:10.4px;font-weight:700;transform:scaleX(0.985);transform-origin:100% 50%;'>104.4</span>
<span class="t" style='right:767.2px;top:354.6px;font-size:10.4px;font-weight:700;transform:scaleX(0.985);transform-origin:100% 50%;'>14.1</span>
<span class="t" style='right:738.8px;top:354.6px;font-size:10.4px;font-weight:700;transform:scaleX(0.985);transform-origin:100% 50%;'>92%</span>
<span class="t" style='right:707.6px;top:354.6px;font-size:10.4px;font-weight:700;transform:scaleX(0.985);transform-origin:100% 50%;'>9.0</span>
<span class="t" style='left:157.0px;top:354.6px;font-size:10.4px;font-weight:700;'>(</span>
<span class="t" style='left:2.0px;top:653.5px;font-size:10.4px;font-weight:700;transform:scaleX(0.993);'>100</span>
<span class="t" style='right:794.4px;top:653.5px;font-size:10.4px;font-weight:700;transform:scaleX(0.985);transform-origin:100% 50%;'>104.4</span>
<span class="t" style='right:767.2px;top:653.5px;font-size:10.4px;font-weight:700;transform:scaleX(0.985);transform-origin:100% 50%;'>14.7</span>
<span class="t" style='right:738.8px;top:653.5px;font-size:10.4px;font-weight:700;transform:scaleX(0.985);transform-origin:100% 50%;'>94%</span>
<span class="t" style='right:707.6px;top:653.5px;font-size:10.4px;font-weight:700;transform:scaleX(0.985);transform-origin:100% 50%;'>10.1</span>
<span class="t" style='left:157.0px;top:653.5px;font-size:10.4px;font-weight:700;'>(</span>
<div class="abs" style="left:0;top:555.2px;width:159.6px;height:10.6px;border-top:1px dotted #666;border-bottom:1px dotted #666"></div>
<div class="abs" style="left:159.6px;top:57.8px;width:12.4px;height:756.6px;background:linear-gradient(90deg,#e6e6e6,#f3f3f3 45%,#efefef)"></div>
<div class="abs" style="left:160.4px;top:66px;width:9.4px;height:454px;border:1px solid #b4b4b8;border-radius:2px;background:linear-gradient(90deg,#f6f6f6,#e8e8ea 50%,#d4d4d8)"></div>
<svg class="abs" style="left:162.8px;top:804.6px" width="6" height="4" viewBox="0 0 6 4" preserveAspectRatio="none"><path d="M0.3 0.4h5.4L3 3.6z" fill="#555"/></svg>
<div class="abs" style="left:0;top:814.4px;width:159.6px;height:11.6px;background:linear-gradient(#e6e6e6,#f3f3f3 45%,#efefef)"></div>
<div class="abs" style="left:159.6px;top:814.4px;width:12.4px;height:11.6px;background:#f0f0f0"></div>
<div class="abs" style="left:12.9px;top:815px;width:119.6px;height:8.8px;border:1px solid #a0a0a0;border-radius:2px;background:linear-gradient(#f5f5f5,#e6e6e6 50%,#d6d6d6)"></div>
<svg class="abs" style="left:2.9px;top:817.3px" width="4" height="6" viewBox="0 0 4 6" preserveAspectRatio="none"><path d="M3.6 0.3v5.4L0.4 3z" fill="#555"/></svg>
<svg class="abs" style="left:150.2px;top:817.3px" width="4" height="6" viewBox="0 0 4 6" preserveAspectRatio="none"><path d="M0.4 0.3v5.4L3.6 3z" fill="#555"/></svg>
<svg class="abs" style="left:69.8px;top:817.8px" width="6" height="5" viewBox="0 0 6 5" preserveAspectRatio="none"><path d="M1 0.4v4.2M3 0.4v4.2M5 0.4v4.2" stroke="#666" stroke-width="0.8"/></svg>
<div class="abs" style="left:172px;top:39px;width:7px;height:787px;background:#f7f7f7"></div>
<div class="abs" style="left:171.6px;top:39px;width:0.8px;height:787px;background:#dcdcdc"></div>
<svg class="abs" style="left:0;top:0" width="856" height="843" viewBox="0 0 856 843">
<defs><clipPath id="vc"><rect x="179" y="41.5" width="674" height="784.5"/></clipPath></defs>
<rect x="179" y="41.5" width="674" height="784.5" fill="#c0c0c0"/>
<g clip-path="url(#vc)">
<circle cx="516.4" cy="433.8" r="252.40" fill="#000"/>
<circle cx="516.4" cy="433.8" r="377.20" fill="none" stroke="#000" stroke-width="1.4"/>
<circle cx="516.4" cy="433.8" r="335.60" fill="none" stroke="#000" stroke-width="1.4"/>
<circle cx="516.4" cy="433.8" r="294.00" fill="none" stroke="#000" stroke-width="1.4"/>
<circle cx="516.4" cy="433.8" r="210.80" fill="none" stroke="#fff" stroke-width="1.2"/>
<circle cx="516.4" cy="433.8" r="169.20" fill="none" stroke="#fff" stroke-width="1.2"/>
<circle cx="516.4" cy="433.8" r="127.60" fill="none" stroke="#fff" stroke-width="1.2"/>
<circle cx="516.4" cy="433.8" r="86.00" fill="none" stroke="#fff" stroke-width="1.2"/>
<circle cx="516.4" cy="433.8" r="44.40" fill="none" stroke="#fff" stroke-width="1.2"/>
<g font-family='"Liberation Serif", serif' font-size="29.2" text-anchor="middle">
<text x="515.4" y="86.3" fill="#000">1</text>
<text x="515.4" y="798.9" fill="#000">1</text>
<text x="157.9" y="442.8" fill="#000">1</text>
<text x="872.8" y="442.8" fill="#000">1</text>
<text x="515.4" y="127.7" fill="#000">2</text>
<text x="515.4" y="757.5" fill="#000">2</text>
<text x="199.5" y="442.8" fill="#000">2</text>
<text x="831.2" y="442.8" fill="#000">2</text>
<text x="515.4" y="169.0" fill="#000">3</text>
<text x="515.4" y="716.2" fill="#000">3</text>
<text x="241.1" y="442.8" fill="#000">3</text>
<text x="789.6" y="442.8" fill="#000">3</text>
<text x="515.4" y="210.3" fill="#fff">4</text>
<text x="515.4" y="674.9" fill="#fff">4</text>
<text x="282.7" y="442.8" fill="#fff">4</text>
<text x="748.0" y="442.8" fill="#fff">4</text>
<text x="515.4" y="251.7" fill="#fff">5</text>
<text x="515.4" y="633.5" fill="#fff">5</text>
<text x="324.3" y="442.8" fill="#fff">5</text>
<text x="706.4" y="442.8" fill="#fff">5</text>
<text x="515.4" y="293.0" fill="#fff">6</text>
<text x="515.4" y="592.2" fill="#fff">6</text>
<text x="365.9" y="442.8" fill="#fff">6</text>
<text x="664.8" y="442.8" fill="#fff">6</text>
<text x="515.4" y="334.4" fill="#fff">7</text>
<text x="515.4" y="550.8" fill="#fff">7</text>
<text x="407.5" y="442.8" fill="#fff">7</text>
<text x="623.2" y="442.8" fill="#fff">7</text>
<text x="515.4" y="375.7" fill="#fff">8</text>
<text x="515.4" y="509.5" fill="#fff">8</text>
<text x="449.1" y="442.8" fill="#fff">8</text>
<text x="581.6" y="442.8" fill="#fff">8</text>
</g>
<circle cx="514.4" cy="437.3" r="36.9" fill="#ff00ff"/>
<path d="M491.7 409.6 L500.6 403.0 L512.4 401.3 L518.4 407.8 L527.9 412.5 L540.9 415.5 L542.1 418.5 L537.4 420.2 L539.7 425.6 L535.0 424.4 L531.4 429.1 L536.2 431.5 L526.7 430.9 L523.1 425.6 L520.8 429.1 L517.2 425.6 L514.8 430.3 L510.1 428.0 L505.3 425.6 L499.4 426.8 L495.2 423.2 L491.1 419.7 L493.5 414.9 L490.5 412.5Z" fill="#00ff00"/>
<path d="M465.0 428.0 L469.7 430.9 L476.9 434.5 L472.1 429.1 L480.4 428.6 L494.7 430.9 L479.2 435.1 L498.2 437.4 L495.8 440.4 L479.8 444.6 L497.0 443.4 L499.4 447.2 L500.6 441.0 L510.1 452.9 L512.4 454.1 L516.0 446.9 L525.5 441.6 L521.9 437.4 L510.1 436.3" fill="none" stroke="#00ff00" stroke-width="2.0" stroke-linejoin="round" stroke-linecap="round" />
<path d="M574.1 41.9 L586.4 42.8 L595.9 47.6 L600.6 55.2 L602.5 60.9 L608.8 69.4 L605.4 78.0 L597.8 87.4 L591.2 96.9 L588.3 106.4 L585.5 119.7 L583.6 129.2 L590.2 135.8 L591.7 146.3 L593.1 152.0 L582.6 147.2 L567.4 148.2 L566.5 153.9 L573.1 161.4 L579.8 169.0 L575.0 171.3 L580.7 172.8 L586.4 182.3 L578.8 191.8 L572.2 199.4 L565.9 214.7 L561.2 221.3 L551.7 226.1 L555.5 232.7 L558.3 237.4 L547.9 243.1 L537.4 250.7 L525.1 260.2 L528.0 264.0 L540.3 266.9 L542.8 263.1 L520.4 251.7 L542.8 263.1 L534.6 266.9 L539.7 275.4 L540.3 286.8 L535.5 302.0 L532.7 311.0 L531.5 318.0 L530.7 324.6 L533.2 333.8 L544.4 335.9 L543.2 338.8 L536.1 344.6 L529.0 343.7 L524.9 337.9 L517.4 332.1 L506.6 328.8 L500.0 329.2 L499.1 330.9 L505.0 335.4 L510.8 341.3 L503.7 342.5 L509.1 345.4 L514.9 340.0 L518.2 342.9 L514.9 346.2 L509.9 348.7 L513.3 351.2 L519.9 349.1 L524.9 351.2 L529.9 349.6 L527.4 345.4 L529.0 343.7 L529.0 352.9 L531.5 357.9 L538.2 362.9 L544.8 361.2 L544.4 366.2 L540.7 368.7 L536.5 376.1 L531.5 380.3 L527.4 377.8 L526.5 367.8 L521.6 365.8 L514.9 369.5 L509.1 372.4 L514.1 372.8 L524.9 370.3 L526.5 368.2 L514.1 374.5 L514.9 379.5 L509.1 386.4 L505.6 391.2 L508.0 397.1 L499.7 395.3 L509.1 400.7 L493.7 401.9 L480.7 398.3 L477.7 400.7 L481.9 404.2 L490.2 407.8 L498.0 406.5 L505.0 409.0" fill="none" stroke="#00ff00" stroke-width="2.2" stroke-linejoin="round" stroke-linecap="round" />
<path d="M496 431 L499 427.5 L507 428.5 L512 431 L516 428 L519 431.5 L525 434 L524 436.5 L514 436 L506 434.5 L499 437 L496 436 Z" fill="#ffff00"/>
<path d="M516.5 434.5 L522.5 434 L523 436 L517 436.5 Z" fill="#8080ff"/>
<path d="M480.4 433.3 H542.1 M511.5 401.3 V463.5" stroke="#ff9966" stroke-width="0.9" fill="none"/>
<path d="M546.5 368.0 L529.3 374.6" fill="none" stroke="#ff0000" stroke-width="3.0" stroke-linejoin="round" stroke-linecap="round" />
<path d="M546.5 368.0 L529.3 374.6 L518.6 378.1 L519.8 380.5 L531.7 381.7 L547.1 390.0 L547.7 392.4 L536.4 395.9 L521.0 391.2 L518.6 391.2 L529.3 396.5 L551.9 398.3 L534.1 398.3 L529.3 397.1 L528.1 403.0 L541.2 414.9 L523.4 413.7 L504.4 411.3 L499.7 407.8 L509.1 400.7 L517.4 391.2 L521.0 381.7 L526.9 376.9" fill="none" stroke="#ff0000" stroke-width="2.1" stroke-linejoin="round" stroke-linecap="round" />
<path d="M519.8 384.0 L515.5 398.0 L513.6 402.0 L513.2 437.0" fill="none" stroke="#ff0000" stroke-width="2.3" stroke-linejoin="round" stroke-linecap="round" />
</g>
</svg>
<div class="abs" style="left:179px;top:759px;width:145px;height:67px;background:#9b9b9b"></div>
<span class="t" style='left:193.9px;top:762.8px;font-size:59.5px;font-weight:700;color:#fff;transform:scaleX(0.951);'>10.8</span>
<div class="abs" style="left:0;top:826px;width:853px;height:1.2px;background:#fbfbfb"></div>
<svg class="abs" style="left:843.0px;top:832.0px" width="10" height="11" viewBox="0 0 10 11" preserveAspectRatio="none"><path d="M1 11L10 2M4 11L10 5M7 11L10 8" stroke="#8c8c8c" stroke-width="1.1"/></svg>
<div class="menu" style="left:142.8px;top:20.8px;width:179.6px;height:332.4px"></div>
<div class="sep" style="left:145px;top:42.5px;width:176px"></div>
<div class="sep" style="left:145px;top:81.3px;width:176px"></div>
<div class="sep" style="left:145px;top:215.6px;width:176px"></div>
<div class="sep" style="left:145px;top:254.8px;width:176px"></div>
<div class="sep" style="left:145px;top:309.9px;width:176px"></div>
<div class="sep" style="left:145px;top:333.3px;width:176px"></div>
<div class="abs" style="left:144.9px;top:313.8px;width:175px;height:15.4px;background:#3399ff"></div>
<svg class="abs" style="left:312.6px;top:318.1px" width="4" height="7" viewBox="0 0 4 7" preserveAspectRatio="none"><path d="M0.3 0.4L3.7 3.5L0.3 6.6z" fill="#fff"/></svg>
<div class="abs ck" style="left:145.2px;top:23.1px;width:13.8px;height:12.9px"></div><svg class="abs" style="left:149.1px;top:25.8px" width="8" height="8" viewBox="0 0 8 8" preserveAspectRatio="none"><path d="M0.5 3.8L2.2 5.7L5.5 1.9" stroke="#111" stroke-width="1.9" fill="none"/></svg>
<div class="abs ck" style="left:145.2px;top:46.4px;width:13.6px;height:12.6px"></div><svg class="abs" style="left:147.1px;top:48.3px" width="12" height="11" viewBox="0 0 12 11" preserveAspectRatio="none"><circle cx="2.6" cy="2.8" r="2.2" fill="#000"/><circle cx="2.6" cy="8.2" r="2.2" fill="#000"/><rect x="6.5" y="0.8" width="4.6" height="4" fill="#d8d8d8"/><rect x="6.5" y="6.2" width="4.6" height="4" fill="#b8b8b8"/><path d="M6.6 2h4.4M6.6 4.6h4.4M6.6 7.4h4.4M6.6 10h4.4" stroke="#4a4aff" stroke-width="0.9"/></svg>
<svg class="abs" style="left:146.9px;top:64.6px" width="12" height="10" viewBox="0 0 12 10" preserveAspectRatio="none"><circle cx="2.8" cy="2.4" r="2.2" fill="#000"/><circle cx="2.8" cy="7.6" r="2.2" fill="#000"/><circle cx="9" cy="2.4" r="2.2" fill="#000"/><circle cx="9" cy="7.6" r="2.2" fill="#000"/></svg>
<svg class="abs" style="left:146.6px;top:86.5px" width="13" height="13" viewBox="0 0 13 13" preserveAspectRatio="none"><circle cx="6.5" cy="6.5" r="6" fill="#0000ff"/><rect x="5.6" y="5.3" width="1.9" height="4.8" fill="#fff"/><circle cx="6.5" cy="3.4" r="1.1" fill="#fff"/></svg>
<div class="abs ck" style="left:145.2px;top:101.6px;width:13.6px;height:12.6px"></div><svg class="abs" style="left:146.5px;top:102.2px" width="13" height="13" viewBox="0 0 13 13" preserveAspectRatio="none"><circle cx="6.3" cy="6.7" r="5.6" fill="#000"/><circle cx="6.3" cy="6.9" r="1.9" fill="#fff"/><path d="M8 5.5L11.6 1.2" stroke="#ffff00" stroke-width="1.3"/><path d="M4.8 8.6L2 11.8" stroke="#ff0000" stroke-width="1.2"/></svg>
<svg class="abs" style="left:146.5px;top:118.3px" width="13" height="13" viewBox="0 0 13 13" preserveAspectRatio="none"><circle cx="6.5" cy="6.5" r="5.9" fill="#000"/><path d="M0.8 6.5h11.4M6.5 0.8v11.4" stroke="#e8e800" stroke-width="1.1"/></svg>
<svg class="abs" style="left:146.7px;top:135.2px" width="13" height="12" viewBox="0 0 13 12" preserveAspectRatio="none"><path d="M8.6 0.5v10.5M0.6 10.6h11.8" stroke="#a0a0a0" stroke-width="0.9" fill="none"/><path d="M0.5 5.2L2.2 6.6L3.6 5.3L5.2 7.2L6.8 8.8L8.4 7.4L9.6 5L11 3.6L12.4 4" stroke="#3838ff" stroke-width="1.1" fill="none"/></svg>
<svg class="abs" style="left:146.7px;top:167.7px" width="13" height="9" viewBox="0 0 13 9" preserveAspectRatio="none"><path d="M0.8 8A5.7 5.7 0 0 1 12.2 8" stroke="#444" stroke-width="1" fill="none"/><path d="M11.9 6.2v2" stroke="#ff5050" stroke-width="0.9"/><path d="M4.4 4.6L7 7.6" stroke="#ff0000" stroke-width="1.3"/></svg>
<svg class="abs" style="left:146.5px;top:183.0px" width="13" height="10" viewBox="0 0 13 10" preserveAspectRatio="none"><rect x="0.4" y="3" width="2.4" height="7" fill="#00c000"/><rect x="2.8" y="0.6" width="2.2" height="9.4" fill="#e01020"/><rect x="5.2" y="3.6" width="2.4" height="6.4" fill="#00c000"/><rect x="7.8" y="2" width="2.2" height="8" fill="#00c000"/><rect x="10" y="1" width="2.4" height="9" fill="#e01020"/></svg>
<svg class="abs" style="left:146.7px;top:196.6px" width="13" height="14" viewBox="0 0 13 14" preserveAspectRatio="none"><path d="M1.4 0.6V13M0.4 12.6H12.6" stroke="#707070" stroke-width="0.9" fill="none"/><path d="M1.6 12L4.6 8.6L6.6 10L9 6.6L11.8 0.8" stroke="#ff2020" stroke-width="1.1" fill="none"/></svg>
<div class="abs ck" style="left:145.2px;top:220.2px;width:13.8px;height:12.9px"></div><svg class="abs" style="left:149.1px;top:222.8px" width="8" height="8" viewBox="0 0 8 8" preserveAspectRatio="none"><path d="M0.5 3.8L2.2 5.7L5.5 1.9" stroke="#111" stroke-width="1.9" fill="none"/></svg><div class="abs ck" style="left:145.2px;top:236.0px;width:13.8px;height:12.9px"></div><svg class="abs" style="left:149.1px;top:238.6px" width="8" height="8" viewBox="0 0 8 8" preserveAspectRatio="none"><path d="M0.5 3.8L2.2 5.7L5.5 1.9" stroke="#111" stroke-width="1.9" fill="none"/></svg>
<svg class="abs" style="left:146.9px;top:260.3px" width="13" height="12" viewBox="0 0 13 12" preserveAspectRatio="none"><path d="M8.4 0.6h4.2v4.2z" fill="#ffff00"/><ellipse cx="6" cy="6.6" rx="5.2" ry="4.4" fill="#000"/><path d="M6 4.6v2M6 6.6l-1.7 1.5M6 6.6l1.8 1.4" fill="none" stroke="#fff" stroke-width="0.8"/></svg><svg class="abs" style="left:146.5px;top:275.8px" width="13" height="13" viewBox="0 0 13 13" preserveAspectRatio="none"><ellipse cx="6.6" cy="6.8" rx="5" ry="4.8" fill="#000"/><circle cx="6.8" cy="6.8" r="1.1" fill="#fff"/><path d="M6.6 3.4L11.6 1.8M8.4 0.8L10.2 4.8" stroke="#00d000" stroke-width="1.4"/><path d="M0.8 4.6L5.2 9.2M0.8 9.6L5 4.6" stroke="#ff0000" stroke-width="1.3"/></svg><svg class="abs" style="left:147.4px;top:339.8px" width="11.6" height="10" viewBox="0 0 13 11" preserveAspectRatio="none"><rect x="0.6" y="0.6" width="11.8" height="9.8" rx="1" fill="#888" stroke="#444" stroke-width="0.9"/><rect x="2.4" y="2.4" width="8.2" height="6.2" fill="#40d0c8"/><path d="M3.4 4h6.2M5.4 4v3.8M7.6 4v3.8" stroke="#d8ffff" stroke-width="0.7"/></svg>
<div class="menu" style="left:320.1px;top:311.2px;width:125.1px;height:247.6px"></div>
<div class="sep" style="left:322.2px;top:332.5px;width:122px"></div>
<div class="abs ck" style="left:322.4px;top:369.2px;width:13.8px;height:12.9px"></div><svg class="abs" style="left:326.3px;top:371.9px" width="8" height="8" viewBox="0 0 8 8" preserveAspectRatio="none"><path d="M0.5 3.8L2.2 5.7L5.5 1.9" stroke="#111" stroke-width="1.9" fill="none"/></svg>
<span class="t" style='left:163.7px;top:25.6px;font-size:9.9px;transform:scaleX(0.933);'>Advanced mode</span>
<span class="t" style='left:163.7px;top:49.0px;font-size:9.9px;transform:scaleX(0.874);'>Einzelschussliste</span>
<span class="t" style='left:163.7px;top:64.8px;font-size:9.9px;transform:scaleX(0.884);'>Schussbilder</span>
<span class="t" style='left:163.7px;top:88.2px;font-size:9.9px;transform:scaleX(0.932);'>Generalinformation</span>
<span class="t" style='left:296.4px;top:88.2px;font-size:9.9px;transform:scaleX(0.789);'>F4</span>
<span class="t" style='left:163.7px;top:104.1px;font-size:9.9px;transform:scaleX(0.899);'>Zielweganzeige</span>
<span class="t" style='left:296.4px;top:104.1px;font-size:9.9px;transform:scaleX(0.789);'>F5</span>
<span class="t" style='left:163.7px;top:120.0px;font-size:9.9px;transform:scaleX(0.923);'>Abstandsgrafik</span>
<span class="t" style='left:296.4px;top:120.0px;font-size:9.9px;transform:scaleX(0.789);'>F6</span>
<span class="t" style='left:163.7px;top:135.8px;font-size:9.9px;transform:scaleX(0.937);'>Koordinationsgrafik</span>
<span class="t" style='left:296.4px;top:135.8px;font-size:9.9px;transform:scaleX(0.789);'>F7</span>
<span class="t" style='left:163.7px;top:151.7px;font-size:9.9px;transform:scaleX(0.912);'>Verschobene Zeitgrafik</span>
<span class="t" style='left:296.4px;top:151.7px;font-size:9.9px;transform:scaleX(0.789);'>F8</span>
<span class="t" style='left:163.7px;top:167.6px;font-size:9.9px;transform:scaleX(0.921);'>Geschwindigkeitsgrafik</span>
<span class="t" style='left:296.4px;top:167.6px;font-size:9.9px;transform:scaleX(0.789);'>F9</span>
<span class="t" style='left:163.7px;top:183.5px;font-size:9.9px;transform:scaleX(0.939);'>Zeitintervallgrafik</span>
<span class="t" style='left:290.9px;top:183.5px;font-size:9.9px;transform:scaleX(0.798);'>F10</span>
<span class="t" style='left:163.7px;top:199.3px;font-size:9.9px;transform:scaleX(0.934);'>Einwirkung Munitionsstreuung</span>
<span class="t" style='left:290.9px;top:199.3px;font-size:9.9px;transform:scaleX(0.834);'>F11</span>
<span class="t" style='left:163.7px;top:222.7px;font-size:9.9px;transform:scaleX(0.929);'>Menüleiste</span>
<span class="t" style='left:163.7px;top:238.6px;font-size:9.9px;transform:scaleX(0.883);'>Statusleiste</span>
<span class="t" style='left:163.7px;top:261.7px;font-size:9.9px;transform:scaleX(0.876);'>Probeschüsse anzeigen</span>
<span class="t" style='left:163.7px;top:277.6px;font-size:9.9px;transform:scaleX(0.895);'>Alle Zielwege anzeigen</span>
<span class="t" style='left:163.7px;top:293.5px;font-size:9.9px;transform:scaleX(0.877);'>Verborgene Schüsse anzeigen</span>
<span class="t" style='left:163.7px;top:316.6px;font-size:9.9px;color:#fff;transform:scaleX(0.888);'>Language (Sprachen)</span>
<span class="t" style='left:163.7px;top:340.0px;font-size:9.9px;transform:scaleX(0.892);'>Ganzer Bildschirm</span>
<span class="t" style='left:290.9px;top:340.0px;font-size:9.9px;transform:scaleX(0.798);'>F12</span>
<span class="t" style='left:149.8px;top:151.0px;font-size:11.5px;transform:scaleX(0.951);'>±</span>
<span class="t" style='left:341.0px;top:317.0px;font-size:9.9px;transform:scaleX(0.898);'>English</span>
<span class="t" style='left:341.0px;top:340.3px;font-size:9.9px;transform:scaleX(0.925);'>Arabic</span>
<span class="t" style='left:341.0px;top:356.1px;font-size:9.9px;transform:scaleX(0.906);'>Chinese (Simplified)</span>
<span class="t" style='left:341.0px;top:371.8px;font-size:9.9px;transform:scaleX(0.908);'>Deutsch</span>
<span class="t" style='left:341.0px;top:387.5px;font-size:9.9px;transform:scaleX(0.888);'>French</span>
<span class="t" style='left:341.0px;top:403.7px;font-size:9.9px;transform:scaleX(0.937);'>Italian</span>
<span class="t" style='left:341.0px;top:419.5px;font-size:9.9px;transform:scaleX(0.843);'>Japanese</span>
<span class="t" style='left:341.0px;top:435.3px;font-size:9.9px;transform:scaleX(0.876);'>Korean</span>
<span class="t" style='left:341.0px;top:451.0px;font-size:9.9px;transform:scaleX(0.919);'>Norwegian (Bokmal)</span>
<span class="t" style='left:341.0px;top:466.8px;font-size:9.9px;transform:scaleX(0.910);'>Polish</span>
<span class="t" style='left:341.0px;top:482.6px;font-size:9.9px;transform:scaleX(0.887);'>Portuguese (Brazil)</span>
<span class="t" style='left:341.0px;top:498.3px;font-size:9.9px;transform:scaleX(0.860);'>Russian</span>
<span class="t" style='left:341.0px;top:514.1px;font-size:9.9px;transform:scaleX(0.877);'>Spanish</span>
<span class="t" style='left:341.0px;top:529.9px;font-size:9.9px;transform:scaleX(0.924);'>Turkish</span>
<span class="t" style='left:341.0px;top:546.0px;font-size:9.9px;transform:scaleX(0.896);'>Vietnamese</span>
</body></html>
